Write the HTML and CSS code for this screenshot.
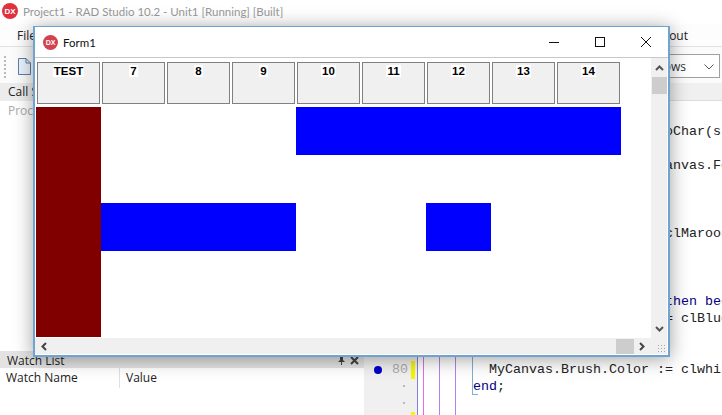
FILE: index.html
```html
<!DOCTYPE html>
<html lang="en">
<head>
<meta charset="utf-8">
<title>Form1</title>
<link rel="stylesheet" href="styles.css">
</head>
<body>
<div class="ide">
  <header class="titlebar">
    <span class="dx dx-ide">DX</span>
    <span class="title-text">Project1 - RAD Studio 10.2 - Unit1 [Running] [Built]</span>
  </header>
  <div class="menubar">
    <span>File</span>
    <span class="layout-label">Default Layout</span>
  </div>
  <div class="toolbar">
    <div class="tools">
      <span class="grip"></span>
      <svg class="doc" width="14" height="17" viewBox="0 0 14 17"><path d="M1.5 .5H9L13.5 5V16.5H1.5Z" fill="#e8f2fb" stroke="#5c7fa3"/><path d="M9 .5V5H13.5" fill="none" stroke="#5c7fa3"/></svg>
    </div>
    <div class="combo"><span>Windows</span>
      <svg width="10" height="6" viewBox="0 0 10 6"><path d="M.5 .5L5 5L9.5 .5" fill="none" stroke="#555"/></svg>
    </div>
  </div>
  <div class="workspace">
    <aside class="left">
      <div class="panel-head">Call Stack</div>
      <div class="panel-row">Procedure</div>
      <div class="watch-head">
        <span>Watch List</span>
        <span class="watch-icons">
          <svg width="9" height="9" viewBox="0 0 9 9"><path d="M2 0H7V1H6V4L8 6H5V9H4V6H1L3 4V1H2Z" fill="#444"/></svg>
          <svg width="9" height="9" viewBox="0 0 9 9"><path d="M1 1L8 8M8 1L1 8" stroke="#444" stroke-width="2"/></svg>
        </span>
      </div>
      <div class="watch-cols"><span class="col-name">Watch Name</span><span class="col-value">Value</span></div>
    </aside>
    <section class="editor">
      <div class="editor-band"></div>
      <div class="editor-body">
        <div class="gutter">
          <div class="gutter-row"><span class="bp"></span><span class="num">80</span><span class="mark"></span></div>
          <div class="gutter-row"><span class="bp off"></span><span class="num">·</span><span class="mark off"></span></div>
          <div class="gutter-row"><span class="bp off"></span><span class="num">·</span><span class="mark off"></span></div>
          <div class="gutter-row"><span class="bp off"></span><span class="num"></span><span class="mark"></span></div>
        </div>
<pre class="code">

                        oChar(s));

                        anvas.Font;



                        clMaroon;



                        <b>then begin</b>
                        = clBlue;


  MyCanvas.Brush.Color := clwhite;
<b>end</b>;</pre>
      </div>
    </section>
  </div>
</div>

<div class="form">
  <div class="form-title">
    <span class="dx dx-form">DX</span>
    <span class="form-name">Form1</span>
    <span class="controls">
      <svg width="12" height="12" viewBox="0 0 12 12"><path d="M1 6.5H11" stroke="#111"/></svg>
      <svg width="12" height="12" viewBox="0 0 12 12"><rect x="1.5" y="1.5" width="9" height="9" fill="none" stroke="#111"/></svg>
      <svg width="12" height="12" viewBox="0 0 12 12"><path d="M1 1L11 11M11 1L1 11" stroke="#111"/></svg>
    </span>
  </div>
  <div class="form-client">
    <div class="form-view">
      <div class="content">
        <div class="buttons">
          <div class="btn"><span>TEST</span></div>
          <div class="btn"><span>7</span></div>
          <div class="btn"><span>8</span></div>
          <div class="btn"><span>9</span></div>
          <div class="btn"><span>10</span></div>
          <div class="btn"><span>11</span></div>
          <div class="btn"><span>12</span></div>
          <div class="btn"><span>13</span></div>
          <div class="btn"><span>14</span></div>
        </div>
        <div class="canvas">
          <div class="cell maroon"></div>
          <div class="cell blue-top"></div>
          <div class="cell blue-mid"></div>
          <div class="cell blue-12"></div>
        </div>
      </div>
      <div class="vscroll">
        <svg width="9" height="6" viewBox="0 0 9 6"><path d="M1 5L4.5 1.5L8 5" fill="none" stroke="#555" stroke-width="2"/></svg>
        <span class="vthumb"></span>
        <svg class="vdown" width="9" height="6" viewBox="0 0 9 6"><path d="M1 1L4.5 4.5L8 1" fill="none" stroke="#555" stroke-width="2"/></svg>
      </div>
    </div>
    <div class="hscroll">
      <svg width="6" height="9" viewBox="0 0 6 9"><path d="M5 1L1.5 4.5L5 8" fill="none" stroke="#444" stroke-width="2"/></svg>
      <span class="hthumb"></span>
      <svg width="6" height="9" viewBox="0 0 6 9"><path d="M1 1L4.5 4.5L1 8" fill="none" stroke="#444" stroke-width="2"/></svg>
      <span class="sizegrip"></span>
    </div>
  </div>
</div>
</body>
</html>
```
FILE: styles.css
```css
* { box-sizing: border-box; }
html, body { margin: 0; padding: 0; }
body {
  position: relative;
  width: 722px;
  height: 415px;
  overflow: hidden;
  background: #fff;
  font-family: "Open Sans", "Liberation Sans", sans-serif;
  font-size: 12px;
  color: #222;
}
.ide { display: flex; flex-direction: column; height: 415px; }

.dx {
  display: inline-flex;
  align-items: center;
  justify-content: center;
  border-radius: 50%;
  color: #fff;
  font-family: "Liberation Sans", sans-serif;
  font-weight: 700;
}
.titlebar {
  height: 24px;
  display: flex;
  align-items: center;
  gap: 5px;
  padding: 0 0 2px 2px;
  background: #fff;
}
.dx-ide { width: 16px; height: 16px; background: #e0313c; font-size: 8px; }
.title-text { color: #999; font-family: Lato, "Open Sans", sans-serif; font-size: 11.5px; white-space: nowrap; }

.menubar {
  height: 23px;
  display: flex;
  justify-content: space-between;
  align-items: center;
  padding: 0 34px 0 17px;
  background: #fdfdfd;
  border-bottom: 1px solid #e2e2e2;
  font-size: 12px;
}
.toolbar {
  height: 36px;
  display: flex;
  justify-content: space-between;
  align-items: center;
  background: #fbfbfb;
}
.tools { display: flex; align-items: center; gap: 11px; padding: 3px 0 0 4px; }
.grip { width: 2px; height: 22px; background: repeating-linear-gradient(#bbb 0 2px, transparent 2px 4px); }
.doc { display: block; }
.combo {
  width: 90px;
  height: 24px;
  margin: 2px 2px 0 0;
  border: 1px solid #a0a0a0;
  background: #fff;
  display: flex;
  justify-content: space-between;
  align-items: center;
  padding: 1px 5px 0 4px;
  color: #333;
}

.workspace { flex: 1; display: flex; min-height: 0; }
.left { width: 364px; display: flex; flex-direction: column; }
.panel-head { height: 18px; line-height: 18px; padding-left: 8px; background: #ececec; }
.panel-row { height: 250px; padding: 1px 0 0 8px; color: #aaa; }
.watch-head {
  height: 17px;
  display: flex;
  justify-content: space-between;
  align-items: center;
  padding: 2px 5px 0 7px;
  background: #e3e3e3;
}
.watch-icons { display: flex; gap: 4px; }
.watch-cols { display: flex; height: 20px; line-height: 20px; }
.col-name { width: 120px; padding-left: 6px; border-right: 1px solid #e0e0e0; }
.col-value { padding-left: 6px; }

.editor { flex: 1; display: flex; flex-direction: column; min-width: 0; }
.editor-band { height: 18px; background: #f0f0f0; border-bottom: 1px solid #ddd; }
.editor-body { flex: 1; display: flex; min-height: 0; }
.gutter { width: 53px; flex: none; padding-top: 260px; background: #f0f0f0; }
.gutter-row { height: 17px; display: flex; align-items: center; }
.bp { width: 8px; height: 8px; margin-left: 10px; border-radius: 50%; background: #0000c8; flex: none; }
.bp.off { background: transparent; }
.num {
  width: 16px;
  margin-left: 10px;
  text-align: right;
  color: #aaa;
  font-family: "Liberation Mono", monospace;
  font-size: 13.33px;
}
.mark { width: 4px; height: 18px; margin-left: 3px; background: #f6f600; }
.mark.off { background: transparent; }
.code {
  flex: 1;
  margin: 0;
  padding: 5px 0 0 55px;
  overflow: hidden;
  border-left: 1px solid #8080d8;
  font-family: "Liberation Mono", monospace;
  font-size: 13.33px;
  line-height: 17px;
  color: #222;
  background-image:
    linear-gradient(#e070e0, #e070e0),
    linear-gradient(#b880e8, #b880e8),
    linear-gradient(#b880e8, #b880e8),
    linear-gradient(#80b0d0, #80b0d0),
    linear-gradient(#80b0d0, #80b0d0);
  background-size: 1px 100%, 1px 100%, 1px 100%, 1px 293px, 6px 1px;
  background-repeat: no-repeat;
  background-position: 5px 0, 21px 0, 37px 0, 54px 0, 54px 293px;
}
.code b { font-weight: 400; color: #000080; }

/* the floating application window over the IDE */
.form {
  position: absolute;
  left: 33px;
  top: 26px;
  width: 637px;
  height: 331px;
  background: #fff;
  border: 2px solid #6ea3d2;
  border-top-width: 1px;
  box-shadow: 0 2px 18px rgba(0, 0, 0, .38);
  display: flex;
  flex-direction: column;
}
.form-title {
  height: 31px;
  flex: none;
  display: flex;
  align-items: center;
  padding-left: 8px;
  border-bottom: 1px solid #c8c8c8;
}
.dx-form { width: 15px; height: 15px; background: #d2434f; font-size: 7px; }
.form-name { margin-left: 5px; font-family: Lato, "Open Sans", sans-serif; font-size: 11.5px; color: #111; }
.controls { margin-left: auto; display: flex; gap: 34px; padding-right: 16px; }
.controls svg { display: block; }

.form-client { flex: 1; display: flex; flex-direction: column; min-height: 0; padding-bottom: 1px; }
.form-view { flex: 1; display: flex; min-height: 0; }
.content { width: 616px; flex: none; overflow: hidden; }
.buttons { display: flex; gap: 2px; padding: 4px 0 3px 2px; }
.btn {
  width: 63px;
  height: 42px;
  flex: none;
  background: #f0f0f0;
  border: 1px solid #808080;
  text-align: center;
  font-family: "Liberation Sans", sans-serif;
  font-size: 11.5px;
  font-weight: 700;
  line-height: 14px;
  padding-top: 1px;
  color: #000;
}
.btn span { background: #fff; padding: 0 1px; }
.canvas {
  margin-left: 1px;
  height: 230px;
  overflow: hidden;
  display: grid;
  grid-template-columns: repeat(9, 65px);
  grid-template-rows: repeat(5, 48px);
}
.maroon { grid-column: 1; grid-row: 1 / 6; background: #800000; }
.blue-top { grid-column: 5 / 10; grid-row: 1; background: #0000ff; }
.blue-mid { grid-column: 2 / 5; grid-row: 3; background: #0000ff; }
.blue-12 { grid-column: 7; grid-row: 3; background: #0000ff; }

.vscroll {
  width: 16px;
  flex: none;
  background: #f0f0f0;
  display: flex;
  flex-direction: column;
  align-items: center;
  padding-top: 7px;
}
.vthumb { width: 15px; height: 17px; margin-top: 6px; background: #cdcdcd; }
.vdown { margin-top: auto; margin-bottom: 6px; }

.hscroll {
  height: 16px;
  flex: none;
  display: flex;
  align-items: center;
  margin-right: 1px;
  padding-left: 6px;
  background: #f0f0f0;
}
.hthumb { width: 18px; height: 15px; margin-left: 569px; background: #cdcdcd; }
.hscroll svg:last-of-type { margin-left: 5px; }
.sizegrip {
  width: 8px;
  height: 8px;
  margin-left: auto;
  margin-right: 2px;
  align-self: flex-end;
  margin-bottom: 2px;
  background: radial-gradient(circle, #a8a8a8 1px, transparent 1px) 0 0 / 3px 3px;
}
```
